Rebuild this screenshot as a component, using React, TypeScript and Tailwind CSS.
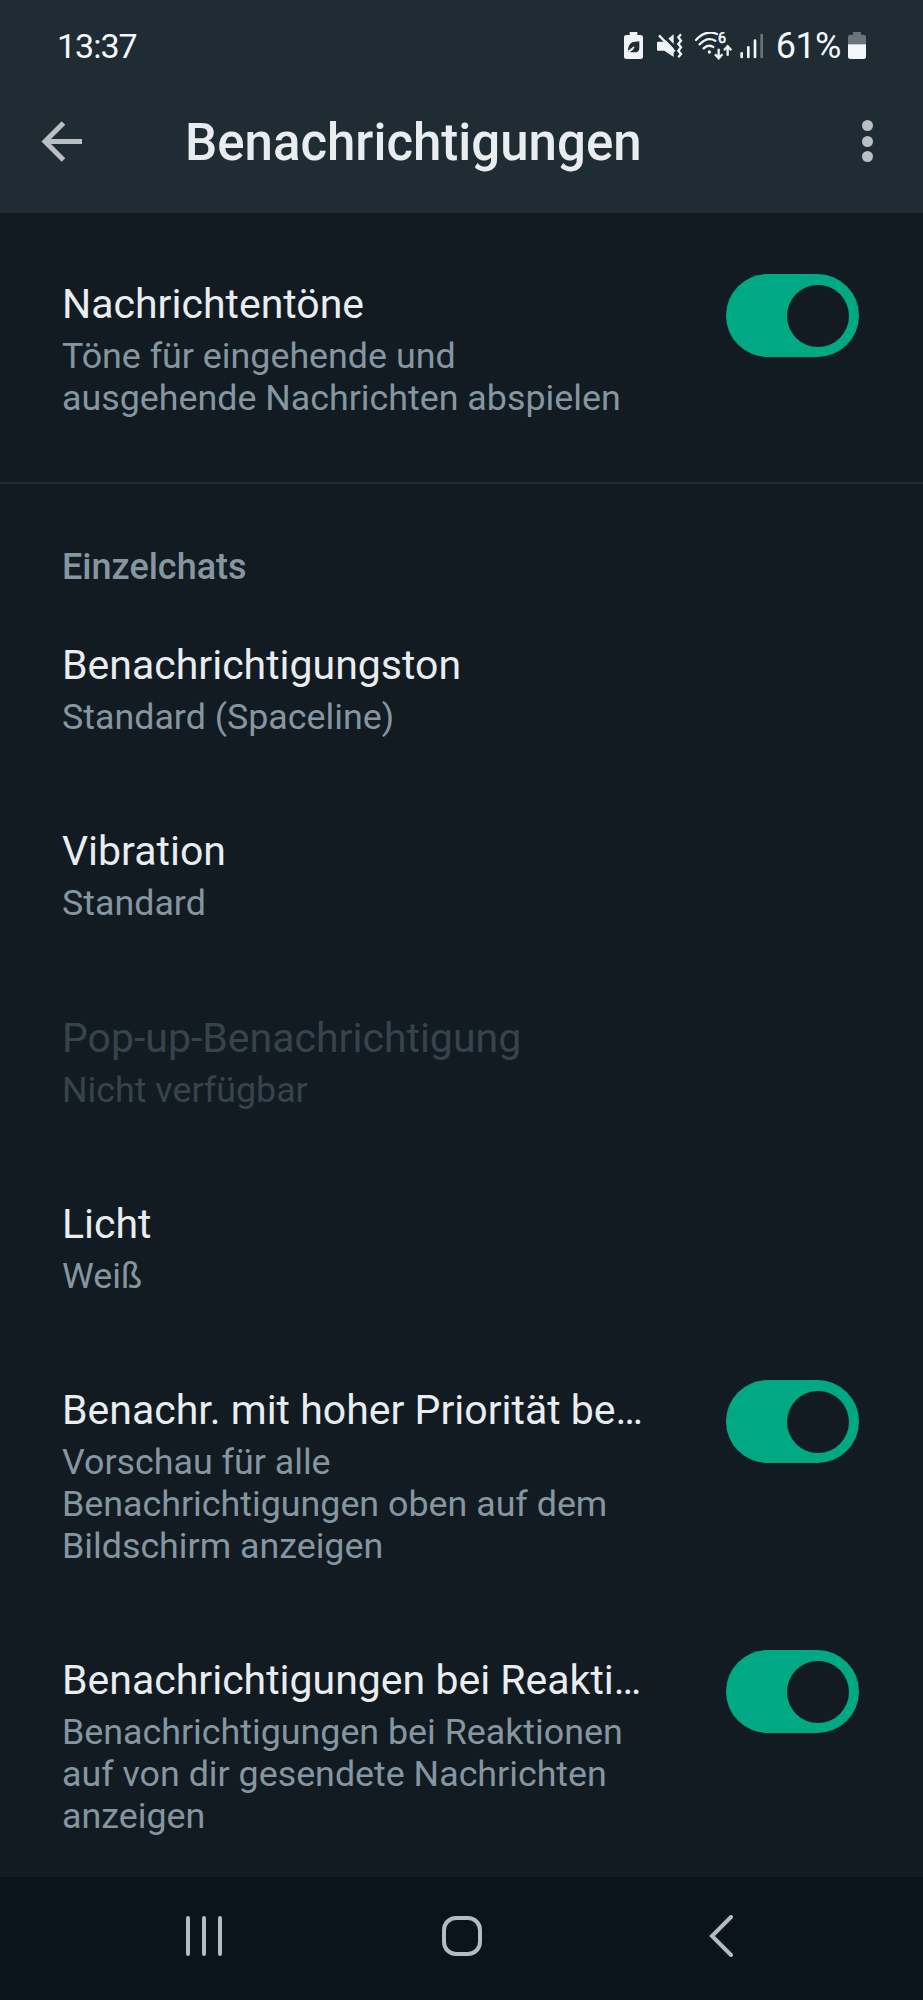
import { ReactNode } from 'react';

const settings = [
  { title: 'Benachrichtigungston', summary: 'Standard (Spaceline)' },
  { title: 'Vibration', summary: 'Standard' },
  { title: 'Pop-up-Benachrichtigung', summary: 'Nicht verfügbar', disabled: true },
  { title: 'Licht', summary: 'Weiß' },
  {
    title: 'Benachr. mit hoher Priorität be…',
    summary: 'Vorschau für alle Benachrichtigungen oben auf dem Bildschirm anzeigen',
    checked: true,
  },
  {
    title: 'Benachrichtigungen bei Reakti…',
    summary: 'Benachrichtigungen bei Reaktionen auf von dir gesendete Nachrichten anzeigen',
    checked: true,
  },
];

function StatusBar() {
  return (
    <div className="flex h-[91px] items-center justify-between pl-[57px] pr-[57px] text-[34px] leading-[40px] text-[#f4f8fa]">
      <span className="tracking-[-1px]">13:37</span>
      <div className="flex items-center">
        <svg className="h-[27px] w-[19px]" viewBox="0 0 57 81">
          <path d="M17 0h23v9h10q7 0 7 7v58q0 7-7 7H7q-7 0-7-7V16q0-7 7-7h10z" fill="#f0f4f6" />
          <path d="M46 28v19q0 14-14 14H20q-7-2-8-9 2-22 22-23zM8 59q14 0 22-16" fill="#202c33" />
          <path d="M6 61q16-1 24-16" fill="none" stroke="#f0f4f6" strokeWidth="4" />
        </svg>
        <svg className="ml-[14px] h-[26px] w-[26px]" viewBox="0 0 78 78" fill="none">
          <path d="M3 26h19L50 4v68L22 53H3q-3 0-3-3V29q0-3 3-3z" fill="#f0f4f6" />
          <path d="M12 0l48 50" stroke="#202c33" strokeWidth="9" />
          <path d="M6 7l47 49" stroke="#f0f4f6" strokeWidth="7" />
          <path d="M72 4l-8 9 8 10-8 10 8 10-8 10 8 10-8 10" stroke="#f0f4f6" strokeWidth="7" />
        </svg>
        <svg className="ml-[12px] h-[28px] w-[38px]" viewBox="0 0 114 84" fill="none" stroke="#f0f4f6" strokeWidth="7">
          <path d="M3 24Q32-8 66 6M14 37q22-24 47-11M26 49q13-13 29-4" strokeLinecap="round" />
          <circle cx="43" cy="60" r="5" fill="#f0f4f6" stroke="none" />
          <path d="M71 50v28M60 67l11 12 11-12M98 71V44M87 55l11-12 11 12" />
          <text x="69" y="34" fontSize="43" fill="#f0f4f6" stroke="#f0f4f6" strokeWidth="2">6</text>
        </svg>
        <svg className="ml-[7px] h-[26px] w-[24px]" viewBox="0 0 72 78" strokeWidth="8" strokeLinecap="round" stroke="#f0f4f6">
          <path d="M5 61v11M25 43v29M45 23v49" />
          <path d="M65 6v66" stroke="#69747b" />
        </svg>
        <span className="ml-[12px] text-[36px] tracking-[-0.500px]">61%</span>
        <svg className="ml-[7px] h-[27px] w-[18px]" viewBox="0 0 54 81">
          <path d="M15 0h24v8h8q7 0 7 7v22H0V15q0-7 7-7h8z" fill="#69747b" />
          <path d="M0 37h54v37q0 7-7 7H7q-7 0-7-7z" fill="#f4f8fa" />
        </svg>
      </div>
    </div>
  );
}

function Toggle() {
  return (
    <div className="-mt-[6px] flex h-[83px] w-[133px] shrink-0 items-center justify-end rounded-full bg-[#00a884] pr-[10px]">
      <div className="size-[62px] rounded-full bg-[#121b22]" />
    </div>
  );
}

interface RowProps {
  title: string;
  summary: ReactNode;
  checked?: boolean;
  disabled?: boolean;
}

function SettingRow({ title, summary, checked, disabled }: RowProps) {
  return (
    <div className="flex justify-between pl-[62px] pr-[64px]">
      <div className={disabled ? 'w-[580px] text-[#37434b]' : 'w-[580px] text-[#8696a0]'}>
        <div className={`whitespace-nowrap text-[41px] leading-[48px] ${disabled ? '' : 'text-[#e9edef]'}`}>{title}</div>
        <div className="mt-[7px] text-[35.800px] leading-[42px]">{summary}</div>
      </div>
      {checked && <Toggle />}
    </div>
  );
}

export default function App() {
  return (
    <div className="flex h-[2000px] w-[923px] flex-col overflow-hidden bg-[#121b22] font-['Roboto',sans-serif]">
      <header className="h-[213px] shrink-0 bg-[#202c33]">
        <StatusBar />
        <div className="flex h-[100px] items-center pl-[41px] pr-[50px]">
          <svg className="size-[41px]" viewBox="0 0 41 41" fill="none" stroke="#b9bfc3" strokeWidth="5">
            <path d="M41 20.5H5M22.500 2L4 20.500l18.500 18.500" />
          </svg>
          <h1 className="ml-[103px] flex-1 pt-[4px] text-[51px] font-medium leading-[62px] text-[#e9edef]">Benachrichtigungen</h1>
          <div className="flex flex-col gap-[4.500px]">
            <span className="size-[11px] rounded-full bg-[#b9bfc3]" />
            <span className="size-[11px] rounded-full bg-[#b9bfc3]" />
            <span className="size-[11px] rounded-full bg-[#b9bfc3]" />
          </div>
        </div>
      </header>

      <main className="min-h-0 flex-1 overflow-hidden">
        <section className="h-[271px] border-b-2 border-[#222d34] pt-[67px]">
          <SettingRow title="Nachrichtentöne" summary="Töne für eingehende und ausgehende Nachrichten abspielen" checked />
        </section>
        <section>
          <h2 className="pl-[62px] pt-[62px] text-[36px] font-medium leading-[42px] text-[#8696a0]">Einzelchats</h2>
          <div className="flex flex-col gap-[89.300px] pt-[53px]">
            {settings.map((item) => (
              <SettingRow key={item.title} {...item} />
            ))}
          </div>
        </section>
      </main>

      <nav className="flex h-[123px] shrink-0 items-center bg-[#0b141a] pb-[5px] pl-[185px]">
        <svg className="h-[40px] w-[38px]" viewBox="0 0 38 40" stroke="#b5bcc0" strokeWidth="4" strokeLinecap="round">
          <path d="M3 2v36M19 2v36M35 2v36" />
        </svg>
        <div className="ml-[219px] h-[40px] w-[40px] rounded-[14px] border-4 border-[#b5bcc0]" />
        <svg className="ml-[227px] h-[42px] w-[24px]" viewBox="0 0 24 42" fill="none" stroke="#b5bcc0" strokeWidth="4" strokeLinecap="round">
          <path d="M22 2L3 21l19 19" />
        </svg>
      </nav>
    </div>
  );
}
